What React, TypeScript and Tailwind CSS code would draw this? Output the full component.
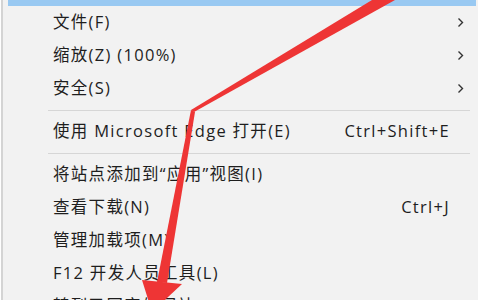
import React from "react";

type Item =
  | { kind: "sep" }
  | { kind: "row"; label: string; shortcut?: string; sub?: boolean };

const items: Item[] = [
  { kind: "row", label: "文件(F)", sub: true },
  { kind: "row", label: "缩放(Z) (100%)", sub: true },
  { kind: "row", label: "安全(S)", sub: true },
  { kind: "sep" },
  { kind: "row", label: "使用 Microsoft Edge 打开(E)", shortcut: "Ctrl+Shift+E" },
  { kind: "sep" },
  { kind: "row", label: "将站点添加到“应用”视图(I)" },
  { kind: "row", label: "查看下载(N)", shortcut: "Ctrl+J" },
  { kind: "row", label: "管理加载项(M)" },
  { kind: "row", label: "F12 开发人员工具(L)" },
  { kind: "row", label: "转到已固定的网站(S)" },
];

const Chevron = () => (
  <svg width="7" height="11" viewBox="0 0 7 11" className="text-[#333]">
    <path d="M1.5 1.5 L5.5 5.5 L1.5 9.5" fill="none" stroke="currentColor" strokeWidth="1.4" />
  </svg>
);

const App = () => {
  return (
    <div
      className="relative h-[300px] w-[480px] overflow-hidden bg-white text-[16.5px] tracking-[1.3px] text-[#1e1e1e]"
      style={{ fontFamily: '"Open Sans", "Noto Sans CJK SC", sans-serif' }}
    >
      <div className="ml-[1px] mr-[2px] flex h-full flex-col border-l-2 border-[#d4d4d4] bg-[#f2f2f2]">
        <div className="ml-[5px] mr-[2px] h-[6px] shrink-0 bg-[#99c9f2]" />
        {items.map((it, i) =>
          it.kind === "sep" ? (
            <div key={i} className="flex h-[10px] shrink-0 items-center pl-[45px] pr-[8px]">
              <div className="h-px w-full bg-[#d6d6d6]" />
            </div>
          ) : (
            <div key={i} className="flex h-[33px] shrink-0 items-center pl-[50px] pr-[14px]">
              <span className="flex-1 whitespace-nowrap">{it.label}</span>
              {it.shortcut && <span className="mr-[14px] whitespace-nowrap">{it.shortcut}</span>}
              {it.sub && <Chevron />}
            </div>
          )
        )}
      </div>
      <svg className="pointer-events-none absolute inset-0" width="480" height="300" viewBox="0 0 480 300">
        <polygon points="372,0 395,0 194,112 191,110" fill="#ee3535" />
        <polygon points="191,110 195,112 167,283 157,282" fill="#ee3535" />
        <polygon points="142,280 182,284 152,312" fill="#ee3535" />
      </svg>
    </div>
  );
};

export default App;
